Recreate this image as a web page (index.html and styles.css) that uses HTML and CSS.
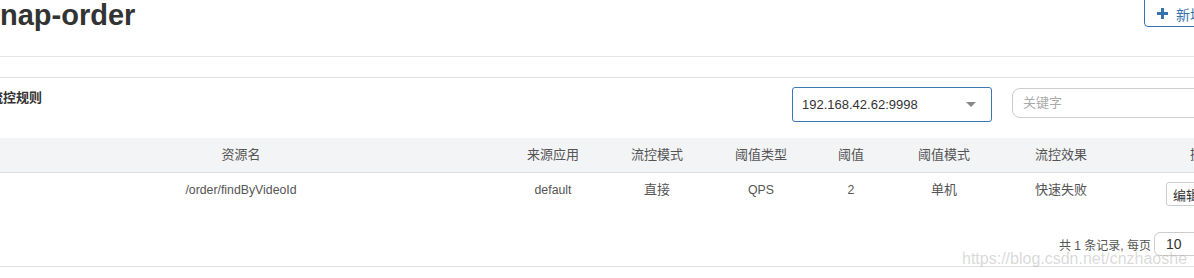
FILE: index.html
```html
<!DOCTYPE html>
<html lang="zh">
<head>
<meta charset="utf-8">
<title>nap-order 流控规则</title>
<link rel="stylesheet" href="styles.css">
</head>
<body>
<div class="page">
  <div class="page-header">
    <h1 class="app-title">nap-order</h1>
    <button class="btn-add" type="button">
      <svg class="plus" width="11" height="11" viewBox="0 0 11 11"><path d="M4 0h3v4h4v3H7v4H4V7H0V4h4z" fill="#3872ae"/></svg>
      <span>新增流控规则</span>
    </button>
  </div>

  <div class="panel">
    <div class="panel-heading">
      <div class="panel-title">流控规则</div>
      <div class="machine-select">
        <span>192.168.42.62:9998</span>
        <span class="caret"></span>
      </div>
      <div class="search-input">关键字</div>
    </div>

    <table class="rules">
      <colgroup>
        <col class="c-res"><col class="c-app"><col class="c-mode"><col class="c-type">
        <col class="c-val"><col class="c-vmode"><col class="c-eff"><col class="c-op">
      </colgroup>
      <thead>
        <tr>
          <th>资源名</th><th>来源应用</th><th>流控模式</th><th>阈值类型</th>
          <th>阈值</th><th>阈值模式</th><th>流控效果</th><th>操作</th>
        </tr>
      </thead>
      <tbody>
        <tr>
          <td class="latin">/order/findByVideoId</td><td class="latin">default</td><td>直接</td><td class="latin">QPS</td>
          <td class="latin">2</td><td>单机</td><td>快速失败</td>
          <td class="ops"><button class="btn-op" type="button">编辑</button><button class="btn-op" type="button">删除</button></td>
        </tr>
      </tbody>
    </table>

    <div class="pager">
      <span class="pager-text">共 1 条记录, 每页</span>
      <div class="page-size">10</div>
    </div>
  </div>
</div>
<div class="watermark">https://blog.csdn.net/cnzhaoshe</div>
</body>
</html>
```

FILE: styles.css
```css
html, body {
  margin: 0;
  padding: 0;
  background: #fff;
  overflow: hidden;
}
body {
  width: 1194px;
  height: 278px;
  position: relative;
  font-family: "Liberation Sans", Arial, "Noto Sans CJK SC", sans-serif;
  color: #555;
}
.page {
  margin-left: -23px;
  width: 1302px;
}
.page-header {
  border-bottom: 1px solid #e5e5e5;
  display: flex;
  align-items: flex-start;
  justify-content: space-between;
  padding-left: 23px;
  box-sizing: border-box;
  height: 57px;
}
.app-title {
  margin: -1px 0 0 0;
  font-size: 29px;
  line-height: 33px;
  font-weight: bold;
  color: #333;
}
.btn-add {
  margin-top: -7px;
  margin-right: -8px;
  height: 34px;
  width: 143px;
  border: 1px solid #3872ae;
  border-radius: 4px;
  background: #fff;
  color: #3872ae;
  font-family: inherit;
  font-size: 14px;
  display: flex;
  align-items: center;
  padding: 7px 0 0 12px;
  gap: 8px;
  box-sizing: border-box;
  white-space: nowrap;
  overflow: hidden;
}
.plus { display: block; flex: none; }

.panel {
  margin-top: 20px;
  border-top: 1px solid #ddd;
  border-bottom: 1px solid #ddd;
}
.panel-heading {
  display: flex;
  align-items: flex-start;
  padding: 9px 15px 16px 13px;
}
.panel-title {
  flex: 1;
  margin-top: 2px;
  font-size: 13px;
  line-height: 18px;
  font-weight: bold;
  color: #333;
}
.machine-select {
  width: 200px;
  height: 35px;
  box-sizing: border-box;
  border: 1px solid #3b78b3;
  border-radius: 3px;
  display: flex;
  align-items: center;
  justify-content: space-between;
  padding: 0 15px 0 9px;
  font-size: 13px;
  color: #333;
}
.caret {
  width: 0;
  height: 0;
  border-left: 5px solid transparent;
  border-right: 5px solid transparent;
  border-top: 5px solid #888;
}
.search-input {
  margin-left: 20px;
  margin-top: 1px;
  width: 252px;
  height: 30px;
  box-sizing: border-box;
  border: 1px solid #ccc;
  border-radius: 8px;
  padding-left: 10px;
  font-size: 13px;
  line-height: 28px;
  color: #aaa;
}

.rules {
  width: 100%;
  border-collapse: collapse;
  table-layout: fixed;
  font-size: 13px;
}
.c-res { width: 528px; }
.c-app { width: 96px; }
.c-mode { width: 112px; }
.c-type { width: 96px; }
.c-val { width: 84px; }
.c-vmode { width: 102px; }
.c-eff { width: 132px; }
.c-op { width: 152px; }
.rules th {
  background: #f3f4f6;
  height: 34px;
  padding: 0;
  font-weight: normal;
  color: #555;
  border-bottom: 1px solid #ddd;
  text-align: center;
  line-height: 18px;
}
.rules td {
  padding: 8px 0;
  text-align: center;
  vertical-align: top;
  line-height: 18px;
  color: #555;
}
.rules td.latin {
  font-size: 12.3px;
}
.rules td.ops {
  text-align: left;
  padding-left: 39px;
  padding-top: 9px;
  padding-bottom: 7px;
  white-space: nowrap;
}
.btn-op {
  height: 24px;
  padding: 0 6px;
  border: 1px solid #ccc;
  border-radius: 3px;
  background: #fff;
  font-family: inherit;
  font-size: 13px;
  color: #333;
  margin-right: 4px;
}

.pager {
  display: flex;
  justify-content: flex-end;
  align-items: center;
  padding: 19px 65px 10px 0;
}
.pager-text {
  font-size: 12px;
  color: #555;
  margin-right: 3px;
}
.page-size {
  width: 60px;
  height: 24px;
  box-sizing: border-box;
  border: 1px solid #ccc;
  border-radius: 6px;
  font-size: 14px;
  line-height: 22px;
  padding-left: 11px;
  color: #333;
}

.watermark {
  position: absolute;
  left: 962px;
  top: 250px;
  font-size: 16px;
  line-height: 18px;
  color: rgba(170, 170, 170, 0.45);
  white-space: nowrap;
}
```
